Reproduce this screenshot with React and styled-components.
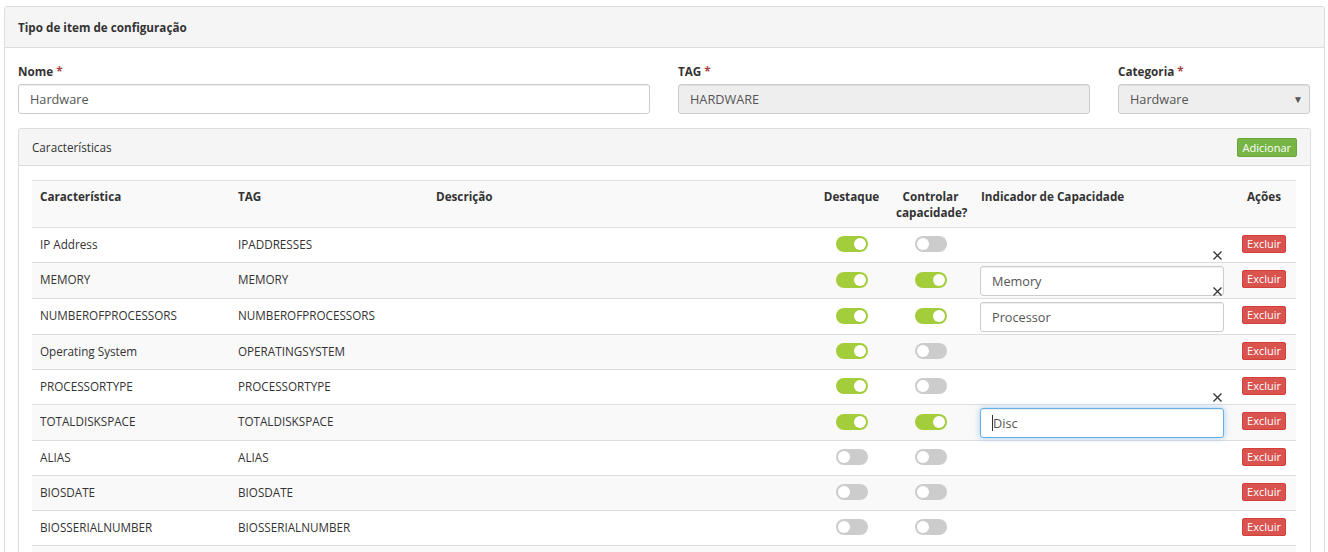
import React from "react";
import styled, { createGlobalStyle } from "styled-components";

const GlobalStyle = createGlobalStyle`
  html, body {
    margin: 0;
    padding: 0;
    background: #fff;
    overflow: hidden;
  }
  body {
    font-family: "Open Sans", "Liberation Sans", sans-serif;
    font-size: 11.7px;
    color: #333;
  }
  * { box-sizing: border-box; }
`;

const Page = styled.div`
  padding: 6px 3px 0 4px;
`;

const Panel = styled.div`
  border: 1px solid #ddd;
  border-radius: 3px;
  background: #fff;
`;

const PanelHeading = styled.div`
  display: flex;
  align-items: center;
  justify-content: space-between;
  height: ${(p) => (p.$small ? "37px" : "41px")};
  padding: 0 13px;
  background: #f5f5f5;
  border-bottom: 1px solid #ddd;
  font-weight: ${(p) => (p.$small ? 400 : 700)};
  border-radius: 3px 3px 0 0;
`;

const PanelBody = styled.div`
  padding: ${(p) => (p.$inner ? "14px 13px 0" : "15px 13px 0")};
`;

const FormRow = styled.div`
  display: grid;
  grid-template-columns: 632px 412px 192px;
  column-gap: 28px;
  margin-bottom: 14px;
`;

const Field = styled.div`
  display: flex;
  flex-direction: column;
`;

const Label = styled.label`
  font-weight: 700;
  line-height: 17px;
  margin-bottom: 4px;
`;

const Required = styled.span`
  color: #a94442;
`;

const TextInput = styled.div`
  height: 30px;
  display: flex;
  align-items: center;
  padding: 0 11px;
  font-size: 12.7px;
  color: #555;
  border: 1px solid ${(p) => (p.$focus ? "#66afe9" : "#ccc")};
  border-radius: 3px;
  background: ${(p) => (p.$disabled ? "#eee" : "#fff")};
  box-shadow: ${(p) =>
    p.$focus
      ? "inset 0 1px 1px rgba(0,0,0,.075), 0 0 6px rgba(102,175,233,.6)"
      : "inset 0 1px 1px rgba(0,0,0,.075)"};
`;

const Caret = styled.span`
  display: inline-block;
  width: 1px;
  height: 16px;
  background: #333;
`;

const SelectArrow = styled.span`
  margin-left: auto;
  font-size: 10px;
  color: #555;
  margin-right: -5px;
`;

const AddButton = styled.button`
  height: 19px;
  padding: 0 5px;
  border: 1px solid #6aa63a;
  border-radius: 2px;
  background: #77b545;
  color: #fff;
  font-family: inherit;
  font-size: 11px;
  line-height: 17px;
`;

const Table = styled.table`
  width: 1264px;
  table-layout: fixed;
  border-collapse: collapse;
  border-top: 1px solid #ddd;
`;

const HeadRow = styled.tr`
  background: #f9f9f9;
  height: 47px;
`;

const Th = styled.th`
  text-align: ${(p) => p.$align || "left"};
  vertical-align: top;
  padding: 7px 8px 0;
  font-weight: 700;
  line-height: 16px;
  white-space: nowrap;
`;

const Row = styled.tr`
  background: ${(p) => (p.$striped ? "#f9f9f9" : "#fff")};
  height: ${(p) => (p.$tall ? "36px" : "35px")};
  border-top: 1px solid #ddd;
`;

const Td = styled.td`
  text-align: ${(p) => p.$align || "left"};
  vertical-align: middle;
  padding: 0 8px 3px;
  white-space: nowrap;
`;

const IndicatorCell = styled.td`
  vertical-align: top;
  padding: 3px 7px 2px;
`;

const Toggle = styled.span`
  display: inline-block;
  vertical-align: middle;
  position: relative;
  width: 32px;
  height: 16px;
  border-radius: 8px;
  background: ${(p) => (p.$on ? "#a3cd3b" : "#ccc")};
  &::after {
    content: "";
    position: absolute;
    top: 2px;
    left: ${(p) => (p.$on ? "18px" : "2px")};
    width: 12px;
    height: 12px;
    border-radius: 50%;
    background: #fff;
  }
`;

const IndicatorWrap = styled.div`
  position: relative;
  width: 244px;
`;

const Clear = styled.svg`
  position: absolute;
  right: 2px;
  top: -15px;
  width: 9px;
  height: 9px;
`;

const DeleteButton = styled.button`
  height: 18px;
  padding: 0 4px;
  border: 1px solid #d43f3a;
  border-radius: 2px;
  background: #d9534f;
  color: #fff;
  font-family: inherit;
  font-size: 11px;
  line-height: 16px;
  vertical-align: middle;
`;

const rows = [
  { name: "IP Address", tag: "IPADDRESSES", highlight: true, control: false },
  { name: "MEMORY", tag: "MEMORY", highlight: true, control: true, indicator: "Memory" },
  { name: "NUMBEROFPROCESSORS", tag: "NUMBEROFPROCESSORS", highlight: true, control: true, indicator: "Processor" },
  { name: "Operating System", tag: "OPERATINGSYSTEM", highlight: true, control: false },
  { name: "PROCESSORTYPE", tag: "PROCESSORTYPE", highlight: true, control: false },
  { name: "TOTALDISKSPACE", tag: "TOTALDISKSPACE", highlight: true, control: true, indicator: "Disc", focus: true },
  { name: "ALIAS", tag: "ALIAS", highlight: false, control: false },
  { name: "BIOSDATE", tag: "BIOSDATE", highlight: false, control: false },
  { name: "BIOSSERIALNUMBER", tag: "BIOSSERIALNUMBER", highlight: false, control: false },
];

export default function App() {
  return (
    <>
      <GlobalStyle />
      <Page>
        <Panel>
          <PanelHeading>Tipo de item de configuração</PanelHeading>
          <PanelBody>
            <FormRow>
              <Field>
                <Label>
                  Nome <Required>*</Required>
                </Label>
                <TextInput>Hardware</TextInput>
              </Field>
              <Field>
                <Label>
                  TAG <Required>*</Required>
                </Label>
                <TextInput $disabled>HARDWARE</TextInput>
              </Field>
              <Field>
                <Label>
                  Categoria <Required>*</Required>
                </Label>
                <TextInput $disabled>
                  Hardware
                  <SelectArrow>▼</SelectArrow>
                </TextInput>
              </Field>
            </FormRow>

            <Panel>
              <PanelHeading $small>
                Características
                <AddButton type="button">Adicionar</AddButton>
              </PanelHeading>
              <PanelBody $inner>
                <Table>
                  <colgroup>
                    <col style={{ width: 198 }} />
                    <col style={{ width: 198 }} />
                    <col style={{ width: 387 }} />
                    <col style={{ width: 73 }} />
                    <col style={{ width: 85 }} />
                    <col style={{ width: 259 }} />
                    <col style={{ width: 64 }} />
                  </colgroup>
                  <thead>
                    <HeadRow>
                      <Th>Característica</Th>
                      <Th>TAG</Th>
                      <Th>Descrição</Th>
                      <Th $align="center">Destaque</Th>
                      <Th $align="center">
                        Controlar
                        <br />
                        capacidade?
                      </Th>
                      <Th>Indicador de Capacidade</Th>
                      <Th $align="center">Ações</Th>
                    </HeadRow>
                  </thead>
                  <tbody>
                    {rows.map((r, i) => (
                      <Row key={r.tag} $striped={i % 2 === 1} $tall={!!r.indicator}>
                        <Td>{r.name}</Td>
                        <Td>{r.tag}</Td>
                        <Td></Td>
                        <Td $align="center">
                          <Toggle $on={r.highlight} />
                        </Td>
                        <Td $align="center">
                          <Toggle $on={r.control} />
                        </Td>
                        <IndicatorCell>
                          {r.indicator && (
                            <IndicatorWrap>
                              <Clear viewBox="0 0 9 9">
                                <path d="M0.5 0.5 L8.5 8.5 M8.5 0.5 L0.5 8.5" stroke="#333" strokeWidth="1.3" fill="none" />
                              </Clear>
                              <TextInput $focus={r.focus}>
                                {r.focus && <Caret />}
                                {r.indicator}
                              </TextInput>
                            </IndicatorWrap>
                          )}
                        </IndicatorCell>
                        <Td $align="center">
                          <DeleteButton type="button">Excluir</DeleteButton>
                        </Td>
                      </Row>
                    ))}
                    <Row $striped>
                      <Td colSpan={7}></Td>
                    </Row>
                  </tbody>
                </Table>
              </PanelBody>
            </Panel>
          </PanelBody>
        </Panel>
      </Page>
    </>
  );
}
